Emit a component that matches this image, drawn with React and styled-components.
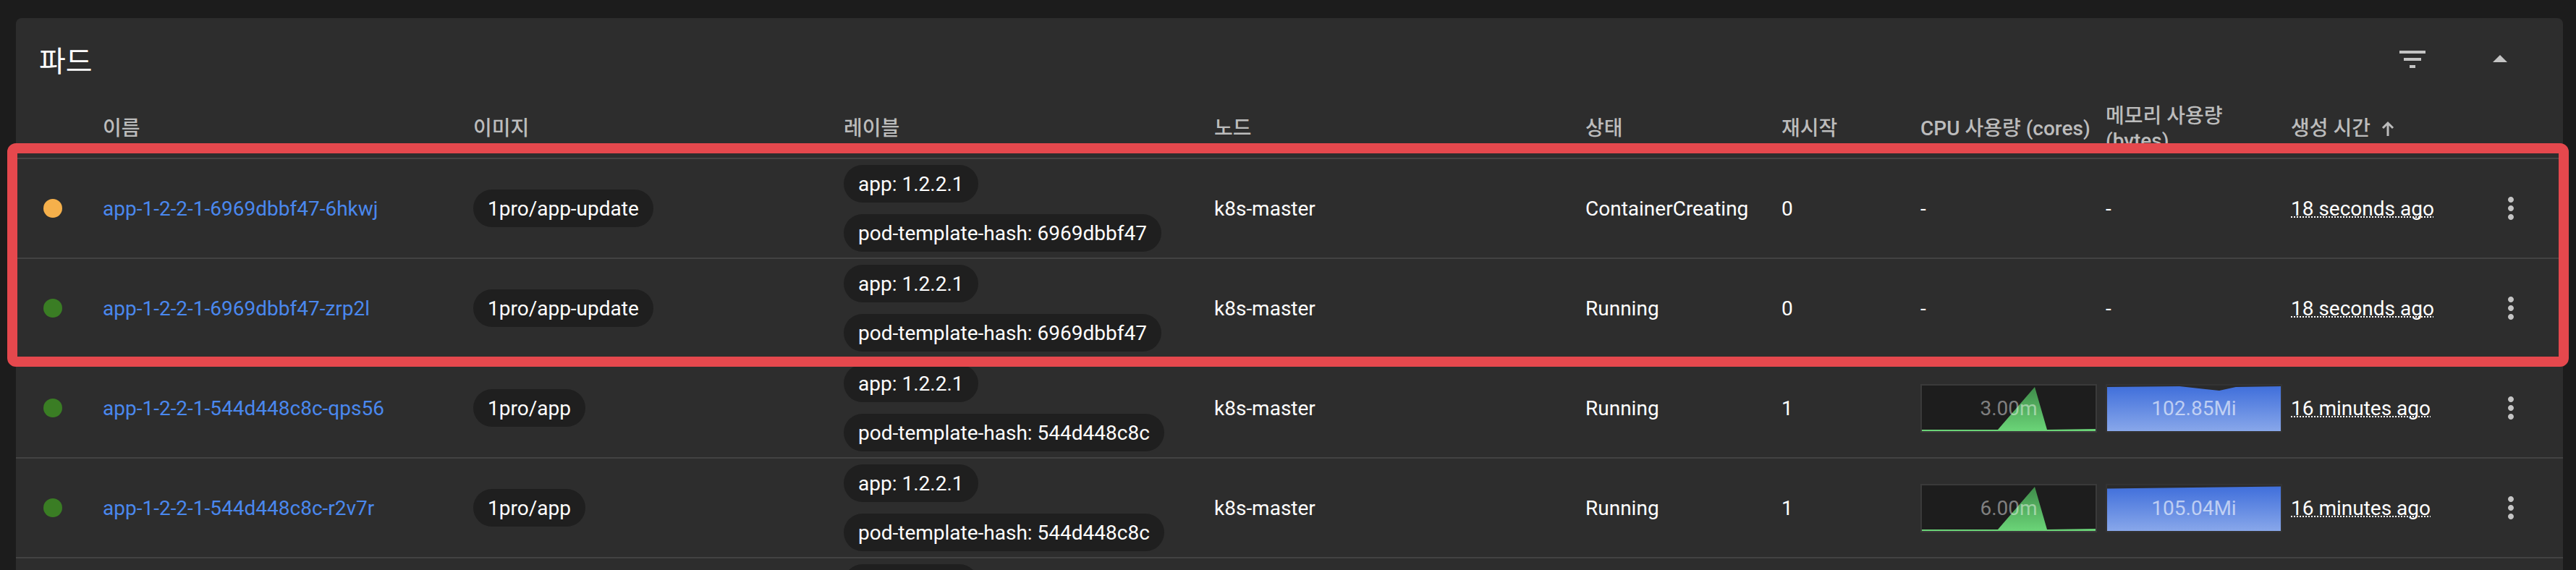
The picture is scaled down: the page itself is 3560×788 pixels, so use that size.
import React from 'react'
import styled, { createGlobalStyle } from 'styled-components'

const GlobalStyle = createGlobalStyle`
  html, body {
    margin: 0;
    padding: 0;
    background: #1c1c1c;
    overflow: hidden;
  }
  body {
    font-family: Roboto, 'Noto Sans CJK KR', sans-serif;
    -webkit-font-smoothing: antialiased;
  }
`

const COLUMNS = '120px 512px 512px 512px 513px 271px 192px 256px 256px 256px 96px'

const pods = [
  {
    status: 'pending',
    name: 'app-1-2-2-1-6969dbbf47-6hkwj',
    image: '1pro/app-update',
    labels: ['app: 1.2.2.1', 'pod-template-hash: 6969dbbf47'],
    node: 'k8s-master',
    phase: 'ContainerCreating',
    restarts: 0,
    age: '18 seconds ago',
  },
  {
    status: 'running',
    name: 'app-1-2-2-1-6969dbbf47-zrp2l',
    image: '1pro/app-update',
    labels: ['app: 1.2.2.1', 'pod-template-hash: 6969dbbf47'],
    node: 'k8s-master',
    phase: 'Running',
    restarts: 0,
    age: '18 seconds ago',
  },
  {
    status: 'running',
    name: 'app-1-2-2-1-544d448c8c-qps56',
    image: '1pro/app',
    labels: ['app: 1.2.2.1', 'pod-template-hash: 544d448c8c'],
    node: 'k8s-master',
    phase: 'Running',
    restarts: 1,
    cpu: '3.00m',
    mem: '102.85Mi',
    memTop: [[0, 2], [100, 1], [155, 7], [178, 2], [240, 1]],
    age: '16 minutes ago',
  },
  {
    status: 'running',
    name: 'app-1-2-2-1-544d448c8c-r2v7r',
    image: '1pro/app',
    labels: ['app: 1.2.2.1', 'pod-template-hash: 544d448c8c'],
    node: 'k8s-master',
    phase: 'Running',
    restarts: 1,
    cpu: '6.00m',
    mem: '105.04Mi',
    memTop: [[0, 4.5], [240, 1.5]],
    age: '16 minutes ago',
  },
  {
    status: 'running',
    name: 'app-1-2-2-1-544d448c8c-x9k4t',
    image: '1pro/app',
    labels: ['app: 1.2.2.1', 'pod-template-hash: 544d448c8c'],
    node: 'k8s-master',
    phase: 'Running',
    restarts: 1,
    cpu: '3.00m',
    mem: '101.20Mi',
    memTop: [[0, 2], [240, 2]],
    age: '16 minutes ago',
  },
]

const Page = styled.div`
  position: relative;
  width: 3560px;
  height: 788px;
  box-sizing: border-box;
  padding: 25px 18px 0 22px;
  overflow: hidden;
`

const Card = styled.section`
  background: #2d2d2d;
  border-radius: 8px 8px 0 0;
  color: #fff;
`

const CardHeader = styled.header`
  height: 113px;
  display: flex;
  align-items: center;
  padding: 0 63px 0 32px;
`

const Title = styled.h2`
  flex: 1;
  margin: 0;
  font-size: 40px;
  font-weight: 400;
  color: #fff;
`

const HeaderActions = styled.div`
  display: flex;
  align-items: center;
  gap: 73px;
`

const IconButton = styled.button`
  width: 48px;
  height: 48px;
  padding: 0;
  border: 0;
  background: none;
  color: #c4c4c4;
  display: flex;
  align-items: center;
  justify-content: center;
  svg {
    width: 48px;
    height: 48px;
    fill: currentColor;
  }
`

const Grid = styled.div`
  display: grid;
  grid-template-columns: ${COLUMNS};
  padding-right: 24px;
  align-items: center;
`

const HeadRow = styled(Grid)`
  height: 80px;
  border-bottom: 2px solid #444;
`

const HeadCell = styled.div`
  padding-right: 8px;
  font-size: 28px;
  line-height: 34px;
  font-weight: 500;
  color: #bcbcbc;
  display: flex;
  align-items: center;
  gap: 14px;
`

const SortArrow = styled.svg`
  width: 20px;
  height: 22px;
  stroke: #bcbcbc;
  stroke-width: 3;
  fill: none;
`

const Row = styled(Grid)`
  height: 136px;
  border-bottom: 2px solid #424242;
  font-size: 28px;
`

const Cell = styled.div`
  display: flex;
  align-items: center;
  justify-content: ${({ $center }) => ($center ? 'center' : 'flex-start')};
  min-width: 0;
  white-space: nowrap;
`

const DotCell = styled(Cell)`
  padding-left: 38px;
`

const StatusDot = styled.span`
  width: 26px;
  height: 26px;
  border-radius: 50%;
  background: ${({ $status }) => ($status === 'pending' ? '#f5b04b' : '#3a7d24')};
`

const NameLink = styled.a`
  color: #4a88ee;
  text-decoration: none;
`

const LabelList = styled.div`
  display: flex;
  flex-direction: column;
  align-items: flex-start;
  gap: 16px;
`

const Chip = styled.span`
  display: inline-flex;
  align-items: center;
  height: 52px;
  padding: 0 20px;
  border-radius: 26px;
  background: #1f1f1f;
  color: #fff;
  font-size: 28px;
`

const Age = styled.span`
  text-decoration: underline dotted;
  text-decoration-thickness: 2px;
  text-underline-offset: 2px;
  text-decoration-skip-ink: none;
`

const MetricBox = styled.div`
  display: grid;
  width: 244px;
  height: 67px;
  box-sizing: border-box;
  border: 2px solid ${({ $kind }) => ($kind === 'cpu' ? '#3a3a3a' : '#333')};
  background: ${({ $kind }) => ($kind === 'cpu' ? '#1d1d1d' : '#2a2a2a')};
  > * {
    grid-area: 1 / 1;
  }
  svg {
    width: 100%;
    height: 100%;
    display: block;
  }
`

const MetricValue = styled.span`
  align-self: center;
  justify-self: center;
  font-size: 28px;
  color: ${({ $kind }) => ($kind === 'cpu' ? 'rgba(255,255,255,0.45)' : 'rgba(255,255,255,0.6)')};
`

const Highlight = styled.div`
  position: absolute;
  left: 10px;
  top: 198px;
  width: 3540px;
  height: 309px;
  box-sizing: border-box;
  border: 14px solid #e5484d;
  border-radius: 12px;
  pointer-events: none;
`

const FilterIcon = () => (
  <svg viewBox="0 0 24 24">
    <path d="M10 18h4v-2h-4v2zM3 6v2h18V6H3zm3 7h12v-2H6v2z" />
  </svg>
)

const CollapseIcon = () => (
  <svg viewBox="0 0 24 24">
    <path d="M7 14l5-5 5 5z" />
  </svg>
)

const MoreIcon = () => (
  <svg viewBox="0 0 24 24">
    <path d="M12 8c1.1 0 2-.9 2-2s-.9-2-2-2-2 .9-2 2 .9 2 2 2zm0 2c-1.1 0-2 .9-2 2s.9 2 2 2 2-.9 2-2-.9-2-2-2zm0 6c-1.1 0-2 .9-2 2s.9 2 2 2 2-.9 2-2-.9-2-2-2z" />
  </svg>
)

const CpuChart = ({ value, id }) => (
  <MetricBox $kind="cpu">
    <svg viewBox="0 0 240 63" preserveAspectRatio="none">
      <defs>
        <linearGradient id={id} x1="0" y1="0" x2="0" y2="1">
          <stop offset="0" stopColor="#3f8c4a" />
          <stop offset="1" stopColor="#6bd578" />
        </linearGradient>
      </defs>
      <path d="M0 63 L0 61 L105 61 L156 2 L173 61 L240 60 L240 63 Z" fill={`url(#${id})`} />
    </svg>
    <MetricValue $kind="cpu">{value}</MetricValue>
  </MetricBox>
)

const MemChart = ({ value, top, id }) => {
  const edge = top.map(([x, y]) => `L${x} ${y}`).join(' ')
  return (
    <MetricBox $kind="mem">
      <svg viewBox="0 0 240 63" preserveAspectRatio="none">
        <defs>
          <linearGradient id={id} x1="0" y1="0" x2="0" y2="1">
            <stop offset="0" stopColor="#406fdb" />
            <stop offset="1" stopColor="#88a7ea" />
          </linearGradient>
        </defs>
        <path d={`M0 63 ${edge} L240 63 Z`} fill={`url(#${id})`} />
      </svg>
      <MetricValue $kind="mem">{value}</MetricValue>
    </MetricBox>
  )
}

const PodRow = ({ pod, index }) => (
  <Row>
    <DotCell>
      <StatusDot $status={pod.status} />
    </DotCell>
    <Cell>
      <NameLink href="#">{pod.name}</NameLink>
    </Cell>
    <Cell>
      <Chip>{pod.image}</Chip>
    </Cell>
    <Cell>
      <LabelList>
        {pod.labels.map((label) => (
          <Chip key={label}>{label}</Chip>
        ))}
      </LabelList>
    </Cell>
    <Cell>{pod.node}</Cell>
    <Cell>{pod.phase}</Cell>
    <Cell>{pod.restarts}</Cell>
    <Cell>{pod.cpu ? <CpuChart value={pod.cpu} id={`cpu-${index}`} /> : '-'}</Cell>
    <Cell>{pod.mem ? <MemChart value={pod.mem} top={pod.memTop} id={`mem-${index}`} /> : '-'}</Cell>
    <Cell>
      <Age>{pod.age}</Age>
    </Cell>
    <Cell $center>
      <IconButton>
        <MoreIcon />
      </IconButton>
    </Cell>
  </Row>
)

export default function App() {
  return (
    <Page>
      <GlobalStyle />
      <Card>
        <CardHeader>
          <Title>파드</Title>
          <HeaderActions>
            <IconButton>
              <FilterIcon />
            </IconButton>
            <IconButton>
              <CollapseIcon />
            </IconButton>
          </HeaderActions>
        </CardHeader>
        <HeadRow>
          <HeadCell />
          <HeadCell>이름</HeadCell>
          <HeadCell>이미지</HeadCell>
          <HeadCell>레이블</HeadCell>
          <HeadCell>노드</HeadCell>
          <HeadCell>상태</HeadCell>
          <HeadCell>재시작</HeadCell>
          <HeadCell>CPU 사용량 (cores)</HeadCell>
          <HeadCell>메모리 사용량 (bytes)</HeadCell>
          <HeadCell>
            생성 시간
            <SortArrow viewBox="0 0 20 22">
              <path d="M10 21 V3 M3 10 L10 3 L17 10" />
            </SortArrow>
          </HeadCell>
          <HeadCell />
        </HeadRow>
        {pods.map((pod, i) => (
          <PodRow key={pod.name} pod={pod} index={i} />
        ))}
      </Card>
      <Highlight />
    </Page>
  )
}
